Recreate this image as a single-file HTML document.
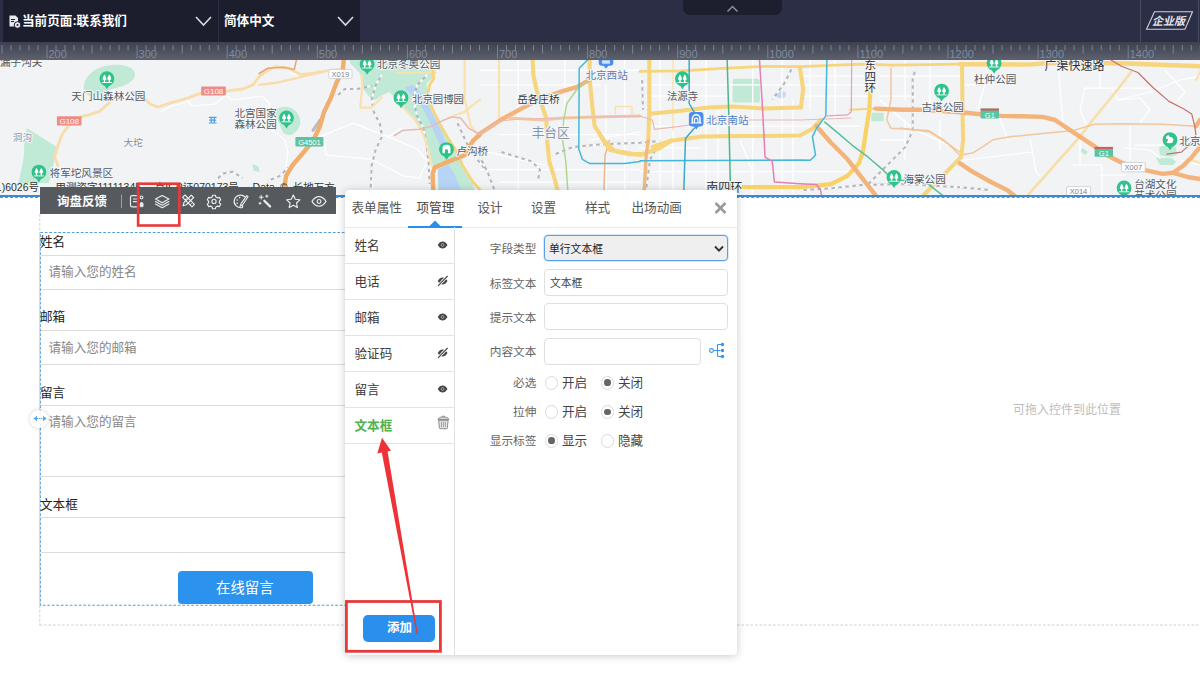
<!DOCTYPE html>
<html lang="zh-CN">
<head>
<meta charset="utf-8">
<title>询盘反馈 - 项管理</title>
<style>
*{box-sizing:border-box;margin:0;padding:0}
html,body{width:1200px;height:677px;overflow:hidden;background:#fff}
body{font-family:"Liberation Sans","Noto Sans CJK SC",sans-serif;color:#333;position:relative}
.abs{position:absolute}
.t{position:absolute;white-space:nowrap;line-height:1}
/* top bar */
#topbar{left:0;top:0;width:1200px;height:42px;background:#2b2e45}
#tb-left{left:3px;top:0;width:357px;height:42px;background:#1c1e2e}
#tb-sep{left:218px;top:0;width:1px;height:42px;background:#2b2e45}
#tb-tab{left:683px;top:0;width:99px;height:15px;background:#1d1f2f;border-radius:0 0 7px 7px}
.tbtxt{color:#fff;font-weight:bold;font-size:12.6px}
/* ruler */
#ruler{left:0;top:42px;width:1200px;height:18px;background:linear-gradient(#3d404f,#5d606d)}
/* map */
#map{left:0;top:60px;width:1200px;height:136px;background:#f1f3f5;overflow:hidden}
#blueline{left:0;top:195px;width:1200px;height:1.600px;background:#3b89d3}
#blueline2{left:0;top:196.500px;width:1200px;height:0;border-top:1px dashed #4a9ae2}
/* toolbar */
#toolbar{left:40px;top:187px;width:296px;height:27px;background:#565a5f}
/* form */
.lbl{color:#222;font-size:12.6px}
.inp{position:absolute;left:41px;width:309px;border-top:1px solid #dcdcdc;border-bottom:1px solid #dcdcdc;background:#fff}
.ph{color:#888;font-size:12.6px}
/* panel */
#panel{left:345px;top:190px;width:392px;height:465px;background:#fff;border-radius:4px;box-shadow:0 1px 8px rgba(0,0,0,.22)}
.tab{color:#555;font-size:12.6px}
.row{position:absolute;left:0;width:109px;height:36px;border-bottom:1px solid #e3e3e3}
.rowt{color:#3a3a3a;font-size:12.6px}
.fl{color:#666;font-size:11.7px;text-align:right;width:80px}
.fi{position:absolute;border:1px solid #dfdfdf;border-radius:4px;background:#fff;height:26.600px}
.rd{position:absolute;width:13.500px;height:13.500px;border:1px solid #dadada;border-radius:50%;background:#fff}
.rd.on::after{content:"";position:absolute;left:2.400px;top:2.400px;width:6.700px;height:6.700px;border-radius:50%;background:#666}
.ro{color:#444;font-size:12.6px}
</style>
</head>
<body>
<!-- TOP BAR -->
<div id="topbar" class="abs"></div>
<div id="tb-left" class="abs"></div>
<div id="tb-sep" class="abs"></div>
<div id="tb-tab" class="abs"></div>
<div class="t tbtxt" style="left:22px;top:15px">当前页面:联系我们</div>
<div class="t tbtxt" style="left:224px;top:15px">简体中文</div>
<svg class="abs" style="left:0;top:0" width="1200" height="42" viewBox="0 0 1200 42" fill="none">
  <path d="M196 17 L203.5 25 L211 17" stroke="#d8d9df" stroke-width="1.6"/>
  <path d="M338 17 L345.5 25 L353 17" stroke="#d8d9df" stroke-width="1.6"/>
  <path d="M727.5 11.5 L732.5 6.5 L737.5 11.5" stroke="#8b8d9b" stroke-width="1.5"/>
  <path d="M1140.5 0V42M1198.5 0V42" stroke="#474b63" stroke-width="1"/>
  <path d="M1154.5 11.8H1192.5L1185 29.3H1146.5Z" stroke="#cfd1dd" stroke-width="1.1"/>
  <!-- page icon -->
  <path d="M9.5 15.5h6l2.5 2.5v8.5h-8.5z" fill="#e8e9ee"/>
  <path d="M11 19.5h4M11 21.5h3" stroke="#1c1e2e" stroke-width="1"/>
  <circle cx="17.5" cy="25" r="3.3" fill="#e8e9ee" stroke="#1c1e2e" stroke-width="1"/>
  <circle cx="17.5" cy="25" r="1" fill="#1c1e2e"/>
</svg>
<div class="t" style="left:1152px;top:15.5px;color:#e4e5ee;font-weight:bold;font-style:italic;font-size:11px;letter-spacing:0">企业版</div>

<!-- RULER -->
<div id="ruler" class="abs"></div>
<svg id="rulersvg" class="abs" style="left:0;top:42px" width="1200" height="18" viewBox="0 0 1200 18" fill="none"><path d="M2.0 3V11.5M92.0 3V11.5M182.2 3V11.5M272.2 3V11.5M362.3 3V11.5M452.4 3V11.5M542.5 3V11.5M632.6 3V11.5M722.8 3V11.5M812.9 3V11.5M902.9 3V11.5M993.0 3V11.5M1083.1 3V11.5M1173.2 3V11.5" stroke="#b5b8c4" stroke-width="1" opacity=".5"/><path d="M11.0 3V8.5M20.0 3V8.5M29.0 3V8.5M38.0 3V8.5M56.0 3V8.5M65.0 3V8.5M74.0 3V8.5M83.0 3V8.5M101.1 3V8.5M110.1 3V8.5M119.1 3V8.5M128.1 3V8.5M146.1 3V8.5M155.1 3V8.5M164.1 3V8.5M173.1 3V8.5M191.2 3V8.5M200.2 3V8.5M209.2 3V8.5M218.2 3V8.5M236.2 3V8.5M245.2 3V8.5M254.2 3V8.5M263.2 3V8.5M281.3 3V8.5M290.3 3V8.5M299.3 3V8.5M308.3 3V8.5M326.3 3V8.5M335.3 3V8.5M344.3 3V8.5M353.3 3V8.5M371.4 3V8.5M380.4 3V8.5M389.4 3V8.5M398.4 3V8.5M416.4 3V8.5M425.4 3V8.5M434.4 3V8.5M443.4 3V8.5M461.5 3V8.5M470.5 3V8.5M479.5 3V8.5M488.5 3V8.5M506.5 3V8.5M515.5 3V8.5M524.5 3V8.5M533.5 3V8.5M551.6 3V8.5M560.6 3V8.5M569.6 3V8.5M578.6 3V8.5M596.6 3V8.5M605.6 3V8.5M614.6 3V8.5M623.6 3V8.5M641.7 3V8.5M650.7 3V8.5M659.7 3V8.5M668.7 3V8.5M686.7 3V8.5M695.7 3V8.5M704.7 3V8.5M713.7 3V8.5M731.8 3V8.5M740.8 3V8.5M749.8 3V8.5M758.8 3V8.5M776.8 3V8.5M785.8 3V8.5M794.8 3V8.5M803.8 3V8.5M821.9 3V8.5M830.9 3V8.5M839.9 3V8.5M848.9 3V8.5M866.9 3V8.5M875.9 3V8.5M884.9 3V8.5M893.9 3V8.5M912.0 3V8.5M921.0 3V8.5M930.0 3V8.5M939.0 3V8.5M957.0 3V8.5M966.0 3V8.5M975.0 3V8.5M984.0 3V8.5M1002.1 3V8.5M1011.1 3V8.5M1020.1 3V8.5M1029.1 3V8.5M1047.1 3V8.5M1056.1 3V8.5M1065.1 3V8.5M1074.1 3V8.5M1092.2 3V8.5M1101.2 3V8.5M1110.2 3V8.5M1119.2 3V8.5M1137.2 3V8.5M1146.2 3V8.5M1155.2 3V8.5M1164.2 3V8.5M1182.3 3V8.5M1191.3 3V8.5M1200.3 3V8.5" stroke="#b5b8c4" stroke-width="1" opacity=".5"/><path d="M47.0 3V16.5M137.1 3V16.5M227.2 3V16.5M317.3 3V16.5M407.4 3V16.5M497.5 3V16.5M587.6 3V16.5M677.7 3V16.5M767.8 3V16.5M857.9 3V16.5M948.0 3V16.5M1038.1 3V16.5M1128.2 3V16.5" stroke="#b5b8c4" stroke-width="1" opacity=".45"/><g font-family="Liberation Sans,sans-serif" font-size="11" fill="#8491a8" opacity=".9"><text x="48.5" y="16.4">200</text><text x="138.6" y="16.4">300</text><text x="228.7" y="16.4">400</text><text x="318.8" y="16.4">500</text><text x="408.9" y="16.4">600</text><text x="499.0" y="16.4">700</text><text x="589.1" y="16.4">800</text><text x="679.2" y="16.4">900</text><text x="769.3" y="16.4">1000</text><text x="859.4" y="16.4">1100</text><text x="949.5" y="16.4">1200</text><text x="1039.6" y="16.4">1300</text><text x="1129.7" y="16.4">1400</text></g></svg>

<!-- MAP -->
<div id="map" class="abs"><svg class="abs" style="left:0;top:0" width="1200" height="136" viewBox="0 60 1200 136" fill="none" stroke-linecap="round" stroke-linejoin="round">
<defs>
  <g id="pk"><path d="M0 10.500L-2.600 6.500h5.200z" fill="#2fc28b"/><circle r="7.400" fill="#2fc28b"/><path d="M-2.400 -4.200c1.300 1.500 1.900 3.400 1.900 5.200h-1.200v2.200h-1.400v-2.200h-1.200c0-1.800.600-3.700 1.900-5.200zM2.400 -4.200c1.300 1.500 1.900 3.400 1.900 5.200h-1.200v2.200h-1.400v-2.200h-1.200c0-1.800.600-3.700 1.900-5.200z" fill="#fff"/><path d="M-4.600 3.800h9.200" stroke="#fff" stroke-width=".9"/></g>
  <g id="g108"><rect x="-12.300" y="-4.600" width="24.600" height="9.200" rx="1" fill="#ee8b86"/><text x="0" y="2.900" text-anchor="middle" font-size="8" fill="#fff" font-family="Liberation Sans,sans-serif">G108</text></g>
  <g id="g1"><rect x="-9.200" y="-4.900" width="18.400" height="9.800" rx="1" fill="#58c4a2"/><rect x="-9.200" y="-4.900" width="18.400" height="2" fill="#d9585a"/><text x="0" y="4" text-anchor="middle" font-size="7.500" fill="#fff" font-family="Liberation Sans,sans-serif">G1</text></g>
</defs>
<rect x="0" y="60" width="1200" height="136" fill="#f1f3f5"/>

<!-- GREEN AREAS -->
<g fill="#c1ead6">
  <path d="M84 90c-1.500-10 7-21 21-24c12-2.500 27-1 29.500 6c2.500 8-7 13.500-19 16c-7 1.500-10 6-17 8c-8 2-13.500-1-14.500-6z"/>
  <path d="M26.900 128.300L37.200 134.500L56.800 146.900L54.800 157.200L51.700 173.800L48.600 183H18.600L23.800 157.200L24.400 140.700Z"/>
  <path d="M276 110c4-4 12-4 17-1c5 3 8 9 7 15c-1 6-6 11-11 11c-5 0-8-5-9-10c-2-5-7-10-4-15z"/>
  <path d="M252 164l6 2l2 6l-6-1z"/>
  <path d="M349 60H435.800L433.700 76.600L426.500 83.800L428.500 97.300L434.700 111.700L440.900 126.200L449.200 140.700L456.400 150L460.600 161.400L468.800 173.800L475 190H437.800V169.600L432.700 165.500L428.500 146.900L423.400 131.400L414.100 119L402.700 106.600L389.300 92.100L382 95.200L374.800 100.400L368.600 96.200L363.400 89L362.400 78.700L359.300 72.500L351 64.200Z"/>
  <rect x="732.600" y="78.700" width="27.300" height="23.700" rx="2.500"/>
  <rect x="871.300" y="112.800" width="12.400" height="8.400" rx="1"/>
  <path d="M1159 147l9-3l8 3l1 8l-8 2l-9-2zM1156 158l16 0l4 4l-3 3h-13z"/>
  <path d="M1083 148l5 4l-3 3l-5-4z"/>
</g>
<!-- WATER -->
<g fill="#b7d4f6">
  <path d="M404.800 87L413 84.900L419.200 91.100L427.500 103.500L434.700 118L440.900 130.400L445 140.700L447 146L441 147L437.800 140.700L431.600 126.200L423.400 109.700L415.100 97.300L406.800 91.100Z"/>
  <path d="M437.800 169.600L448.200 164.500L454.400 173.800L461 190H438.900Z"/>
  <path d="M775 94c2-3 7-4 10-2c2 2 1 5-2 6c-3 1-7 0-8-4z" fill="#c6d9f2"/>
</g>

<!-- WHITE MINOR ROADS -->
<g stroke="#fff" stroke-width="1.250">
  <path d="M160 112L172 106L186 102M187 100L192 106L215 104L226 95L232 100L262 96L270 104L268 116L272 130L285 140L288 152L286 166"/>
  <path d="M288 70L300 78L312 76"/>
  <path d="M320 136.600L353 123.100L388.200 136.600L417.200 149L427.500 161.400L419.200 177.900L402.700 175.800L371.700 159.300L348.900 157.200L326.200 155.200L324.100 140.700"/>
  <path d="M388.200 136.600L402 128M371.700 159.300L372 190"/>
  <path d="M480 70.400H640M480 84.900H600M500 134.500H640M480 169.600H640M500 182H640M518.200 60V195M564.800 60V130M606 85V195M624.700 60V195M590 140L640 132M480 150L520 160L545 165"/>
  <path d="M640 84.900H870M640 96H730M650 126.200H860M640 171.700H860M640 148H700M660 60V195M673 60V195M706 60V195M718 110V195M752.700 60V195M782 60V195M793 100V195M740 140L752 170V195M835 60V120M810 60V110M800 76H870M800 96H870"/>
  <path d="M880 76H960M880 96H915M930 60V110M905 60V100M880 140H905M905 120V160M940 120V150M915 130L960 150M880 100L912 128"/>
  <path d="M965 84.900L1000 84M985 84L978 108M1000 119L1008 140M1030 138L1036 172L1040 176M965 160L1032 152M1058 66L1064 132M1085 88H1150M1085 88L1080 110L1086 124M1100 66V88M1112 88L1118 100L1150 92L1180 80L1200 76"/>
  <path d="M1072 165H1102V195M1080 140V165M1120 100L1140 98L1150 110L1140 122M1165 70L1185 92L1178 100M1130 125V160M1135 145H1165M1124 148L1150 150L1160 158M1100 175H1125M1180 160L1200 165"/>
</g>

<!-- RAIL (dashed) -->
<g stroke="#b3b5ba" stroke-width="2" stroke-linecap="butt">
  <path d="M382 74.500L375.800 84.900L371.700 99.300L373.700 111.700L380 124.200L382 136.600L375.800 149L371.700 165.500L370.600 190"/>
  <path d="M427.500 74.500L417.200 84.900L413 99.300L417.200 115.900L423.400 128.300L426.500 144.800L428.500 161.400L429.600 184"/>
  <path d="M335.500 97.300L344.800 89H357.200L371.700 85.900"/>
  <path d="M552.400 155.200L573 146.900L595.800 144.800L614.400 143.800L640 142.800L660 141"/>
  <path d="M480 157.200L488.300 173.800L494.500 190M498 151L511 155L531.700 161.400L540 169.600L538 180"/>
  <path d="M793 66.300L784.700 82.800L772.300 99.300M642 76.600L643 109.700M660 141L650 160L646 190"/>
  <path d="M915.800 68.300L912.700 78.700V130.400L905.400 146.900L891 161.400L872.400 180L866.100 186.200"/>
  <path d="M800 190.300L831 188.200L862 185.100L903.400 184.100L960 187.200M960 187.200L990 190"/>
  <path d="M215.800 181L222 173.800L232.400 171.700L242.700 178M267.500 181L279.900 175.800L288.200 167.600"/>
  <path d="M456 120L470 150L484 168"/>
</g>
<g stroke="#fafbfc" stroke-width="2.200" stroke-dasharray="3.500 3.500" stroke-linecap="butt">
  <path d="M382 74.500L375.800 84.900L371.700 99.300L373.700 111.700L380 124.200L382 136.600L375.800 149L371.700 165.500L370.600 190"/>
  <path d="M427.500 74.500L417.200 84.900L413 99.300L417.200 115.900L423.400 128.300L426.500 144.800L428.500 161.400L429.600 184"/>
  <path d="M335.500 97.300L344.800 89H357.200L371.700 85.900"/>
  <path d="M552.400 155.200L573 146.900L595.800 144.800L614.400 143.800L640 142.800L660 141"/>
  <path d="M480 157.200L488.300 173.800L494.500 190M498 151L511 155L531.700 161.400L540 169.600L538 180"/>
  <path d="M793 66.300L784.700 82.800L772.300 99.300M642 76.600L643 109.700M660 141L650 160L646 190"/>
  <path d="M915.800 68.300L912.700 78.700V130.400L905.400 146.900L891 161.400L872.400 180L866.100 186.200"/>
  <path d="M800 190.300L831 188.200L862 185.100L903.400 184.100L960 187.200M960 187.200L990 190"/>
  <path d="M215.800 181L222 173.800L232.400 171.700L242.700 178M267.500 181L279.900 175.800L288.200 167.600"/>
  <path d="M456 120L470 150L484 168"/>
</g>

<!-- LIGHT YELLOW / CREAM ROADS -->
<g stroke="#f9e2ad" stroke-width="2.200">
  <path d="M109.600 102.400L99.200 111.700L88.900 114.800L80.600 116.900L68.200 126.200L62 134.500L56.800 149L54.800 157.200L57.900 165.500" stroke="#fadcaa" stroke-width="2.800"/>
  <path d="M134 92L142 96L150 104L158 107L172.400 102.400L186.900 98.300L201.300 93.100L226.200 91.100L242.700 89L253 84.900L259.200 76.600L267.500 70.400L275.800 66.300L288.200 68.300L300.600 74.500L313 73.500L320 71.400" stroke="#fadcaa" stroke-width="2.800"/>
  <path d="M259.200 84.900L275.800 82.800L294.400 78.700L320 72.500L328.300 70.400L340.700 69.400" stroke="#fadcaa" stroke-width="2.400"/>
  <path d="M361.300 74.500L362.400 84.900L360.300 107.600H371.700L382 97.300"/>
  <path d="M396.500 72.500H435.800"/>
  <path d="M402.700 106.600L415.100 120L423.400 134.500L427.500 146.900L430.600 161.400L432.700 167.600"/>
  <path d="M464.700 60V99.300L470.900 126.200L480 136.600M480 99.300L464.700 111.700L448.200 118"/>
  <path d="M499 60V120"/>
  <path d="M615.400 113.800V106.600H632V113.800" stroke-width="1.500"/>
  <path d="M673 60V130" stroke-width="1.500"/>
  <path d="M1131 72L1120 86.500L1108.800 100.500L1094.400 118L1079.900 136.600L1063.400 155.200L1046.800 173.800L1030.300 192.400L1026 197" stroke="#f7dfa6" stroke-width="2.600"/>
  <path d="M1192 160L1200 163M1196 80L1200 72"/>
</g>

<!-- THIN PEACH ROADS -->
<g stroke="#f2c69e" stroke-width="1.500">
  <path d="M259.200 73.500L267.500 68.300L284 67.300L294.400 69.400L296.400 60" stroke="#e5a87c"/>
  <path d="M891 68.300V99.300L886.800 120L891 128.300L928.200 130.400L944.700 140.700L960 155.200"/>
  <path d="M960 155.200L972.400 153.100L982.700 146.900L993.100 139.700L1011.700 136.600L1042.700 133.500L1073.700 130.400L1094.400 124.200L1121.400 123.800L1162.800 124.200L1195.900 126.300"/>
  <path d="M900 128L930 132L950 145L960 152"/>
  <path d="M609.200 140.700L605.100 155.200L604 190" stroke="#eeb58a"/>
</g>

<!-- MAIN YELLOW ROADS -->
<g stroke="#f7d57d" stroke-width="4.100">
  <path d="M432.700 62L433.700 78.700L429.600 84.900L427.500 95.200L432.700 109.700L439.900 124.200L448.200 138.600L456.400 151L462.600 165.500L473 182L480 190" stroke-width="2.800"/>
  <path d="M532.700 60L533.300 74.500L536.800 91.100L542 105.500L546.200 118L547.200 140.700L549.300 161.400L554.400 177.900L558 192"/>
  <path d="M589.600 60V78.700L592.700 109.700L594.700 126.200L604 140.700L614.400 151L628.800 154.100H640"/>
  <path d="M600 135L610 150L640 155L660 148L671 140.700"/>
  <path d="M640 71.400L681.300 70.800L722.700 68.300L764 66.300L800 66.700L862 64.200L893 65.200L960 64.200" stroke-width="2.800"/>
  <path d="M649.300 60V109.700L648.300 140.700"/>
  <path d="M649.300 113.800L681.300 110.700L708.200 107.600L733 106.600L764 108.600L800 107.600" stroke-width="4"/>
  <path d="M652.400 146.900L671 140.700L702 136.600L743.400 136.100L800 135.500L812 129L820.700 120" stroke-width="4"/>
  <path d="M800 68L803.100 89L801 107.600"/>
  <path d="M743.400 187.200H800L831 184.100L847.500 175.800L858.900 163.400L863 151L866.100 130.400L869.300 109.700L870.300 93.100V60" stroke="#f8d264" stroke-width="4.200"/>
  <path d="M849.600 109.700L875.500 108.600" stroke-width="2"/>
  <path d="M960 64.200L1028 64.600L1046.800 63.200L1120 63.200L1200 66.300" stroke-width="4.400"/>
  <path d="M962 64.200L962.500 109.700L963.100 140.700L961 157.200L944.700 173.800L932.300 186.200L922 197" stroke-width="4"/>
</g>

<!-- ORANGE ROADS -->
<g stroke="#f3b37a" stroke-width="4.400">
  <path d="M320 120L313 130.400" stroke="#b9bbbf" stroke-width="3"/>
  <path d="M343.800 60L342.700 70.400L336.500 82.800L330.300 99.300L324.100 111.700L320 126.200L313 140.700L304.700 151L292.300 165.500L286.100 175.800L284 190" stroke="#f2ae6c"/>
  <path d="M480 134.500L473 140.700L464.700 155.200L454.400 159.300L444 163.400L434.700 167.600L432.700 173.800L433.300 192" stroke="#f2ae6c"/>
  <path d="M480 133.500L500.700 120L521.300 108.600L542 98.300L562.700 91.100L577.200 86.900L591.600 78.700"/>
  <path d="M509 118L542 120L562.700 118L593.700 116.900L640 115.900" stroke="#f5c9a0" stroke-width="3"/>
  <path d="M648.300 140.700L646.200 155.200L644.100 192" stroke="#f1b97e" stroke-width="3.400"/>
  <path d="M875.500 108.600L903.400 109.700L924 109.700L960 112.200L980.700 114.200L1001.300 115.900L1022 116.300L1042.700 116.900L1055.100 120L1067.500 128.300L1079.900 136.600L1092.300 144.800L1106.900 155.200L1121.400 162.500L1142.100 169.700L1162.800 173.900L1173.100 172.800L1183.400 165.600L1191.700 157.300L1200 147"/>
  <path d="M1173.100 172.800L1187.600 177L1200 179M1195.900 126.300L1200 120"/>
  <path d="M816.500 126.200L831 142.800L847.500 159.300L862 177.900L877 197"/>
  <path d="M960 163.400L972.400 171.700L991 182L1007.500 190.300L1016 197"/>
</g>

<!-- SUBWAY / COLOURED THIN LINES -->
<g stroke-width="1.500">
  <path d="M394.400 135.500L402.700 130.400L419.200 129.300L431.600 126.200L444 120L452.300 116.900L460.600 118L468.800 128.300L480 134.500" stroke="#e8bab2"/>
  <path d="M480 134L500 121L520 119L640 116L652.400 120L654.500 129.300L689.600 125.200M706.200 120H800L851 118" stroke="#e9b9b9" stroke-width="1.200"/>
  <path d="M591.600 78.700L577.200 89L566.800 103.500L563.700 120L562.700 140.700L565.800 161.400L567.900 192" stroke="#acd992"/>
  <path d="M587.500 60L579.200 68.300L578.800 149L582.300 159.300L589.600 163.400H624.700L640 161.400M640 160.700L800 160.100L810.300 160.300L815.500 155.200L812.400 136.600L816.500 128.300L825.800 115.900L826.900 60" stroke="#45b8da"/>
  <path d="M689.200 60V103.500L694.200 112.200M694.200 128.300L685.500 138.600L683.800 192" stroke="#3aa9ca"/>
  <path d="M727.200 60L728.900 120L730.500 192" stroke="#4cb688"/>
  <path d="M759.500 60L762 99.300L765.100 157.200L772.300 161.400L774.400 182L800 183.700L816.500 184.500L820.700 190.300L821.700 197" stroke="#e57fb4"/>
  <path d="M851.700 60L851.300 111.700L847.500 114.800L826.900 115.900" stroke="#e8a3ac" stroke-width="1.200"/>
  <path d="M824.800 122.100L837.200 132.400L851.700 144.800L868.200 157.200L882.700 169.600L888.900 175.800M900 180L928.200 184.100L944.700 197" stroke="#58bf9b"/>
  <path d="M1111 60L1121.400 66.300L1137.900 72.500L1152.400 87L1169 101.400L1183.400 108.700L1191.700 113.900L1194.800 126.300L1195.900 134.600L1189.700 144.900L1181.400 152.100L1166.900 154.200" stroke="#c7716b" stroke-width="1.200"/>
</g>

<!-- BADGES -->
<use href="#g108" x="69.200" y="120.800"/>
<use href="#g108" x="213.500" y="91"/>
<g font-family="Liberation Sans,sans-serif" font-size="7.500" text-anchor="middle">
  <rect x="295.400" y="137" width="28" height="9.500" rx="1" fill="#5cc4a1"/><rect x="295.400" y="137" width="28" height="1.800" fill="#d9585a" opacity=".0"/><text x="309.400" y="144.600" fill="#fff">G4501</text>
  <rect x="328.700" y="69.400" width="23.300" height="9" rx="1.500" fill="#fff" stroke="#c9ccd2" stroke-width=".8"/><text x="340.300" y="76.600" fill="#7c7f86">X019</text>
  <rect x="1121.400" y="162.500" width="23.800" height="9.300" rx="1.500" fill="#fff" stroke="#c9ccd2" stroke-width=".8"/><text x="1133.300" y="169.900" fill="#7c7f86">X007</text>
  <rect x="1066.500" y="186.600" width="24.100" height="9.300" rx="1.500" fill="#fff" stroke="#c9ccd2" stroke-width=".8"/><text x="1078.500" y="194" fill="#7c7f86">X014</text>
</g>
<use href="#g1" x="989.800" y="113.500"/>
<use href="#g1" x="1103.800" y="151.800"/>

<!-- POI ICONS -->
<use href="#pk" x="106.900" y="78.700"/>
<use href="#pk" x="38.900" y="172.100"/>
<use href="#pk" x="286.500" y="118"/>
<use href="#pk" x="367.100" y="64.200"/>
<use href="#pk" x="401" y="97.700"/>
<use href="#pk" x="682.400" y="78.700"/>
<use href="#pk" x="941.600" y="91.100"/>
<use href="#pk" x="894" y="177.500"/>
<use href="#pk" x="994.100" y="63.200"/>
<use href="#pk" x="1124.100" y="188"/>
<!-- bridge icon -->
<g transform="translate(446.500 149.600)"><path d="M0 10.500L-2.600 6.500h5.200z" fill="#2fc28b"/><circle r="7.400" fill="#2fc28b"/><path d="M-4 3.600V-1.600c0-2 1.400-3.200 4-3.200s4 1.200 4 3.200V3.600h-2.400V1.200c0-1-0.600-1.600-1.600-1.600s-1.600.6-1.600 1.600V3.600z" fill="#fff"/></g>
<!-- horse icon -->
<g transform="translate(1170 139.700)"><path d="M0 10.500L-2.600 6.500h5.200z" fill="#2fc28b"/><circle r="7.400" fill="#2fc28b"/><path d="M-3.600 -3.400l2-1.200l1.200 1.600l2.600.8l1.600 2.600l-1 .6v1.600c-1.600 1.400-5 1.400-6.600 0l1.600-1v-2.400l-2 .2z" fill="#fff"/></g>
<!-- train station icons -->
<g transform="translate(696.200 119.200)"><path d="M0 10.200L-3 6.500h6z" fill="#4b8ef0"/><rect x="-7.300" y="-7.200" width="14.600" height="14.400" rx="3.200" fill="#4b8ef0"/><path d="M-3.800 3.400V-0.600a3.800 3.800 0 0 1 7.600 0V3.400" stroke="#fff" stroke-width="1.500" fill="none"/><path d="M-1.700 3.200V0.600a1.700 1.700 0 0 1 3.400 0V3.200M-5 3.800H5" stroke="#fff" stroke-width="1.100" fill="none"/></g>
<g transform="translate(606 58.500)"><path d="M0 10.200L-3 6.500h6z" fill="#4b8ef0"/><rect x="-7.300" y="-7.200" width="14.600" height="14.400" rx="3.200" fill="#4b8ef0"/><path d="M-3.500 2.600h7M-3.500 4.400h7" stroke="#fff" stroke-width="1.100"/></g>
<!-- small blue icon -->
<g transform="translate(212.700 120)" stroke="#4a9fe8" stroke-width="1.200"><path d="M-3.400 -2.600H3.400M-3.400 3H3.400M-1.500 -2.600V3M1.500 -2.600V3M-3 .2H3"/></g>

<!-- LABELS -->
<g font-family="Liberation Sans,Noto Sans CJK SC,sans-serif" font-size="10.600" fill="#565b63" stroke="#f4f6f8" stroke-width="2" paint-order="stroke" stroke-linejoin="round">
  <text x="0" y="65.500" fill="#555">漏子沟关</text>
  <text x="71.300" y="100">天门山森林公园</text>
  <text x="12.800" y="141.200" fill="#8b9cb4" font-size="9.600">洞沟</text>
  <text x="123.600" y="145.800" fill="#8a8c90" font-size="9.600">大坨</text>
  <text x="49.600" y="177.200">将军坨风景区</text>
  <text x="234.400" y="117.200">北宫国家</text>
  <text x="234.400" y="128.400">森林公园</text>
  <text x="376.800" y="68.400">北京冬奥公园</text>
  <text x="412" y="102.700" font-size="10.400">北京园博园</text>
  <text x="456.400" y="154.800">卢沟桥</text>
  <text x="517.200" y="103.100" fill="#33353a">岳各庄桥</text>
  <text x="531.700" y="137.400" fill="#8495ae" font-size="12.700">丰台区</text>
  <text x="585.400" y="79.400" fill="#5b80b8">北京西站</text>
  <text x="666.900" y="100" font-size="10.400">法源寺</text>
  <text x="706.200" y="123.800" fill="#4f7fc6">北京南站</text>
  <text x="706.200" y="191.600" fill="#2f3136" font-size="12">南四环</text>
  <text x="864.500" y="69.400" fill="#2f3136" font-size="11.500">东</text>
  <text x="864.500" y="81" fill="#2f3136" font-size="11.500">四</text>
  <text x="864.500" y="92" fill="#2f3136" font-size="11.500">环</text>
  <text x="921.500" y="111.400">古塔公园</text>
  <text x="903.400" y="182.800">海棠公园</text>
  <text x="974" y="83.100">杜仲公园</text>
  <text x="1044.500" y="69.600" fill="#2f3136" font-size="12">广渠快速路</text>
  <text x="1179.300" y="144.600">北京</text>
  <text x="1134.200" y="188">台湖文化</text>
  <text x="1134.200" y="199.400">艺术公园</text>
</g>
</svg>
</div>
<div id="blueline" class="abs"></div><div id="blueline2" class="abs"></div>

<!-- CANVAS / FORM -->
<!-- copyright text of map (partly hidden) -->
<div id="cp1" class="t" style="right:1161px;top:181.800px;font-size:10.500px;color:#333">© 高德软件 GS(2021)6026号</div>
<div id="cp2" class="t" style="left:55.500px;top:181.800px;font-size:10.500px;color:#333;word-spacing:2.200px">甲测资字11111345 - 京ICP证070173号 - Data © 长地万方</div>
<!-- toolbar -->
<div id="toolbar" class="abs"></div>
<div class="t" style="left:57px;top:195.5px;color:#fff;font-weight:bold;font-size:12.5px">询盘反馈</div>
<svg class="abs" style="left:40px;top:187px" width="296" height="27" viewBox="40 187 296 27" fill="none" stroke="#eceded" stroke-width="1.15" stroke-linecap="round" stroke-linejoin="round">
  <path d="M121.5 195V207.5" stroke="#9fa2a6" stroke-width="1"/>
  <!-- form icon -->
  <path d="M138.800 195.600h-6.600a1.700 1.700 0 0 0-1.700 1.700v7.900a1.700 1.700 0 0 0 1.700 1.700h5.200M133.400 199h5M133.400 201.600h3.600"/>
  <circle cx="141.500" cy="197.400" r="1.400" stroke-width="1.100"/>
  <path d="M140.200 206.300v-2.400a1.400 1.400 0 0 1 2.800 0v2.400z" stroke-width="1" fill="#eceded"/>
  <!-- layers -->
  <path d="M162.200 195.500l6.700 3.600l-6.700 3.600l-6.700-3.600z"/>
  <path d="M155.500 201.600l6.700 3.600l6.700-3.600"/>
  <path d="M155.500 204.100l6.700 3.600l6.700-3.600"/>
  <!-- pencil+ruler -->
  <path d="M183 205.8l1-3.3l7.3-7.3l2.3 2.3l-7.3 7.3z"/>
  <path d="M182.6 197.4l2.4-2.4l9.4 9.4l-2.4 2.4z"/>
  <path d="M185 199.8l1.2-1.2M190 204.8l1.2-1.2" stroke-width="1"/>
  <!-- gear -->
  <circle cx="214" cy="201.4" r="2.1"/>
  <path d="M212.6 195.2h2.8l.5 1.8l1.6.9l1.8-.5l1.4 2.4l-1.3 1.3v1.8l1.3 1.3l-1.4 2.4l-1.8-.5l-1.6.9l-.5 1.8h-2.8l-.5-1.8l-1.6-.9l-1.8.5l-1.4-2.4l1.3-1.3v-1.8l-1.3-1.3l1.4-2.4l1.8.5l1.6-.9z"/>
  <!-- palette -->
  <path d="M245.2 197.2a6.3 6.3 0 1 0-3.6 10.4c1.4-.2 1.3-1.6.4-2.300"/>
  <path d="M246.8 195.6l-5.6 7.8l-1.2 3l2.700-1.7l5.300-8z" stroke-width="1.1"/>
  <circle cx="237.300" cy="200" r=".8" fill="#eceded" stroke="none"/><circle cx="239.600" cy="197.600" r=".8" fill="#eceded" stroke="none"/><circle cx="237.200" cy="203.200" r=".8" fill="#eceded" stroke="none"/>
  <!-- magic wand -->
  <path d="M264.300 200.700l5.800 5.800" stroke-width="2.300"/>
  <path d="M261.200 195.300v3.800M259.300 197.200h3.800M266.800 195v2.400M265.600 196.200h2.400M260 202.300v2M259 203.300h2" stroke-width="1"/>
  <!-- star -->
  <path d="M293.300 195l2 4.200l4.600.6l-3.400 3.200l.9 4.600l-4.100-2.300l-4.100 2.300l.9-4.600l-3.400-3.200l4.600-.6z"/>
  <!-- eye -->
  <path d="M312 201.400c2-3.300 4.400-4.800 7-4.800s5 1.500 7 4.800c-2 3.300-4.400 4.800-7 4.800s-5-1.500-7-4.800z"/>
  <circle cx="319" cy="201.400" r="1.900"/>
</svg>

<!-- grey dotted outer container -->
<svg class="abs" style="left:38px;top:214px" width="4" height="412" viewBox="38 214 4 412" fill="none" stroke="#cfcfcf" stroke-width="1" stroke-dasharray="2.700 1.800"><path d="M39.800 214V625"/></svg>
<svg class="abs" style="left:39px;top:623px" width="1161" height="4" viewBox="39 623 1161 4" fill="none" stroke="#d0d0d0" stroke-width="1" stroke-dasharray="2.700 1.800"><path d="M39.500 625H1200"/></svg>
<!-- blue dashed selection -->
<svg class="abs" style="left:38px;top:230px" width="320" height="378" viewBox="38 230 320 378" fill="none" stroke="#559cdb" stroke-width="1.100" stroke-dasharray="2.700 1.800"><path d="M358 232.500H40.300V605.300H358"/></svg>

<!-- field 1 -->
<div class="t lbl" style="left:40px;top:236.0px">姓名</div>
<div class="inp" style="top:254.500px;height:35px"></div>
<div class="t ph" style="left:48.500px;top:266.0px">请输入您的姓名</div>
<!-- field 2 -->
<div class="t lbl" style="left:40px;top:311.2px">邮箱</div>
<div class="inp" style="top:329.700px;height:35.500px"></div>
<div class="t ph" style="left:48.500px;top:341.5px">请输入您的邮箱</div>
<!-- field 3 -->
<div class="t lbl" style="left:40px;top:386.5px">留言</div>
<div class="inp" style="top:405px;height:71.500px"></div>
<div class="t ph" style="left:48.500px;top:416.0px">请输入您的留言</div>
<!-- field 4 -->
<div class="t lbl" style="left:40px;top:499.0px">文本框</div>
<div class="inp" style="top:517px;height:35.500px"></div>
<!-- submit -->
<div class="abs" style="left:177.500px;top:571px;width:135.500px;height:33px;background:#2b93ee;border-radius:4px"></div>
<div class="t" style="left:216px;top:580.500px;color:#fff;font-size:14.400px">在线留言</div>
<!-- resize handle -->
<div class="abs" style="left:30.300px;top:409.600px;width:18px;height:18px;border-radius:50%;background:rgba(255,255,255,.92);box-shadow:0 0 4px rgba(0,0,0,.2)"></div>
<svg class="abs" style="left:32.500px;top:414px" width="14" height="9" viewBox="0 0 14 9"><path d="M3.500 4.500h7" stroke="#5aabea" stroke-width="1.100" stroke-dasharray="1.500 .600"/><path d="M.300 4.500L4 1.800V7.200ZM13.700 4.500L10 1.800V7.200Z" fill="#5aabea"/></svg>
<!-- placeholder on right -->
<div class="t" style="left:1013px;top:403.500px;color:#bdbdbd;font-size:12px">可拖入控件到此位置</div>


<!-- PANEL -->
<div id="panel" class="abs">
  <!-- header tabs (coordinates relative to panel: x-345, y-190) -->
  <div class="abs" style="left:0;top:36.500px;width:392px;height:1px;background:#e9e9e9"></div>
  <div class="t tab" style="left:6.500px;top:11.500px">表单属性</div>
  <div class="t tab" style="left:71.500px;top:11.500px;color:#444">项管理</div>
  <div class="t tab" style="left:132.500px;top:11.500px">设计</div>
  <div class="t tab" style="left:186px;top:11.500px">设置</div>
  <div class="t tab" style="left:240px;top:11.500px">样式</div>
  <div class="t tab" style="left:286.500px;top:11.500px">出场动画</div>
  <div class="abs" style="left:63px;top:35.700px;width:54px;height:2.200px;background:#2a8ee9"></div>
  <svg class="abs" style="left:83px;top:30px" width="14" height="7" viewBox="0 0 14 7"><path d="M0.500 7L6.300 1.200a1 1 0 0 1 1.400 0L13.500 7Z" fill="#2a8ee9"/></svg>
  <svg class="abs" style="left:369px;top:12px" width="13" height="12" viewBox="0 0 13 12" fill="none" stroke="#9a9a9a" stroke-width="2.600"><path d="M1.500 1L11.500 11M11.500 1L1.500 11"/></svg>

  <!-- left column -->
  <div class="abs" style="left:108.500px;top:37px;width:1px;height:428px;background:#e1e1e1"></div>
  <div class="row" style="top:37px;height:37px"></div>
  <div class="row" style="top:74px;height:36px"></div>
  <div class="row" style="top:110px;height:36px"></div>
  <div class="row" style="top:146px;height:36px"></div>
  <div class="row" style="top:182px;height:36px"></div>
  <div class="row" style="top:218px;height:36px"></div>
  <div class="t rowt" style="left:9.500px;top:49.8px">姓名</div>
  <div class="t rowt" style="left:9.500px;top:85.8px">电话</div>
  <div class="t rowt" style="left:9.500px;top:121.8px">邮箱</div>
  <div class="t rowt" style="left:9.500px;top:157.8px">验证码</div>
  <div class="t rowt" style="left:9.500px;top:193.8px">留言</div>
  <div class="t rowt" style="left:9.500px;top:229.8px;color:#4db251;font-weight:bold">文本框</div>
  <!-- icons column -->
  <svg class="abs" style="left:90px;top:37.200px" width="18" height="216" viewBox="0 0 18 216">
    <defs>
      <g id="eye"><path d="M-4.900 0C-3.500-2.400-1.800-3.500 0-3.500S3.500-2.400 4.900 0C3.500 2.400 1.800 3.500 0 3.500S-3.500 2.400-4.900 0Z" fill="#464646"/><circle r="1.800" fill="#fff" opacity=".6"/><circle r="1.050" fill="#464646"/></g>
    </defs>
    <use href="#eye" x="7.600" y="18"/>
    <use href="#eye" x="7.600" y="54"/><path d="M3 58.800L12.600 49" stroke="#fff" stroke-width="2.600"/><path d="M3 58.800L12.600 49" stroke="#464646" stroke-width="1.100"/>
    <use href="#eye" x="7.600" y="90"/>
    <use href="#eye" x="7.600" y="126"/><path d="M3 130.800L12.600 121" stroke="#fff" stroke-width="2.600"/><path d="M3 130.800L12.600 121" stroke="#464646" stroke-width="1.100"/>
    <use href="#eye" x="7.600" y="162"/>
    <!-- trash -->
    <g fill="none" stroke="#7d7d7d" stroke-width=".9">
      <path d="M3.700 193.200h9.400l-.7 7.600a1 1 0 0 1-1 .9H5.400a1 1 0 0 1-1-.9z" fill="#e9e9e9"/>
      <path d="M3 192.600c0-1.600 2.300-2.700 5.400-2.700s5.400 1.100 5.400 2.700z" fill="#d6d6d6"/>
      <path d="M7 189.900c0-1.100 2.800-1.100 2.800 0"/>
      <path d="M6.400 194.600v5.600M8.400 194.600v5.600M10.400 194.600v5.600" stroke-width=".7"/>
    </g>
  </svg>

  <!-- right form: labels right aligned ending at x=536.5 (rel 191.5) -->
  <div class="t fl" style="left:111.500px;top:52.500px">字段类型</div>
  <div class="t fl" style="left:111.500px;top:87.500px">标签文本</div>
  <div class="t fl" style="left:111.500px;top:121.700px">提示文本</div>
  <div class="t fl" style="left:111.500px;top:156px">内容文本</div>
  <div class="t fl" style="left:111.500px;top:187px">必选</div>
  <div class="t fl" style="left:111.500px;top:216px">拉伸</div>
  <div class="t fl" style="left:111.500px;top:244.700px">显示标签</div>

  <div class="fi" style="left:199px;top:44.700px;width:184px;border:1.300px solid #5a9fe8;background:#efefef;box-shadow:0 0 0 .800px rgba(90,159,232,.3)"></div>
  <div class="t" style="left:204px;top:53.500px;font-size:10.800px;color:#222">单行文本框</div>
  <svg class="abs" style="left:369px;top:54.500px" width="10" height="8" viewBox="0 0 10 8" fill="none" stroke="#333" stroke-width="1.900"><path d="M1 1.500L5 5.700L9 1.500"/></svg>
  <div class="fi" style="left:199px;top:79.300px;width:183.500px"></div>
  <div class="t" style="left:205px;top:88px;font-size:10.800px;color:#444">文本框</div>
  <div class="fi" style="left:199px;top:113.200px;width:183.500px"></div>
  <div class="fi" style="left:199px;top:148px;width:157px"></div>
  <!-- tree icon -->
  <svg class="abs" style="left:363px;top:151px" width="18" height="19" viewBox="0 0 18 19" fill="none" stroke="#3a95ea" stroke-width="1.100">
    <circle cx="3.500" cy="9.500" r="1.900"/>
    <path d="M5.500 9.500h7M9.500 3.500v12M9.500 3.500h3.500M9.500 15.500h3.500"/>
    <circle cx="14.500" cy="3.500" r="1.150" fill="#3a95ea"/><circle cx="14.500" cy="9.500" r="1.150" fill="#3a95ea"/><circle cx="14.500" cy="15.500" r="1.150" fill="#3a95ea"/>
  </svg>

  <!-- radios -->
  <div class="rd" style="left:199.500px;top:186px"></div><div class="t ro" style="left:217px;top:187.1px">开启</div>
  <div class="rd on" style="left:255.500px;top:186px"></div><div class="t ro" style="left:273px;top:187.1px">关闭</div>
  <div class="rd" style="left:199.500px;top:215.300px"></div><div class="t ro" style="left:217px;top:216.3px">开启</div>
  <div class="rd on" style="left:255.500px;top:215.300px"></div><div class="t ro" style="left:273px;top:216.3px">关闭</div>
  <div class="rd on" style="left:199.500px;top:244px"></div><div class="t ro" style="left:217px;top:245.0px">显示</div>
  <div class="rd" style="left:255.500px;top:244px"></div><div class="t ro" style="left:273px;top:245.0px">隐藏</div>

  <!-- add button -->
  <div class="abs" style="left:18px;top:425px;width:72px;height:27px;background:#2b90ed;border-radius:5px"></div>
  <div class="t" style="left:42px;top:432px;color:#fff;font-weight:bold;font-size:12.500px">添加</div>
</div>


<!-- ANNOTATIONS -->
<svg class="abs" style="left:0;top:0;pointer-events:none" width="1200" height="677" viewBox="0 0 1200 677" fill="none">
  <rect x="138.100" y="183.700" width="41.200" height="41.800" stroke="#e8393a" stroke-width="2.600"/>
  <rect x="346.400" y="601.500" width="94" height="49.800" stroke="#e8393a" stroke-width="2.800"/>
  <!-- arrow -->
  <path d="M382 437.800L377.300 453.600L381.800 452.600L416.700 634.600L417.900 634.400L387.600 451.500L391 450.800Z" fill="#ee3338"/>
</svg>

</body>
</html>
